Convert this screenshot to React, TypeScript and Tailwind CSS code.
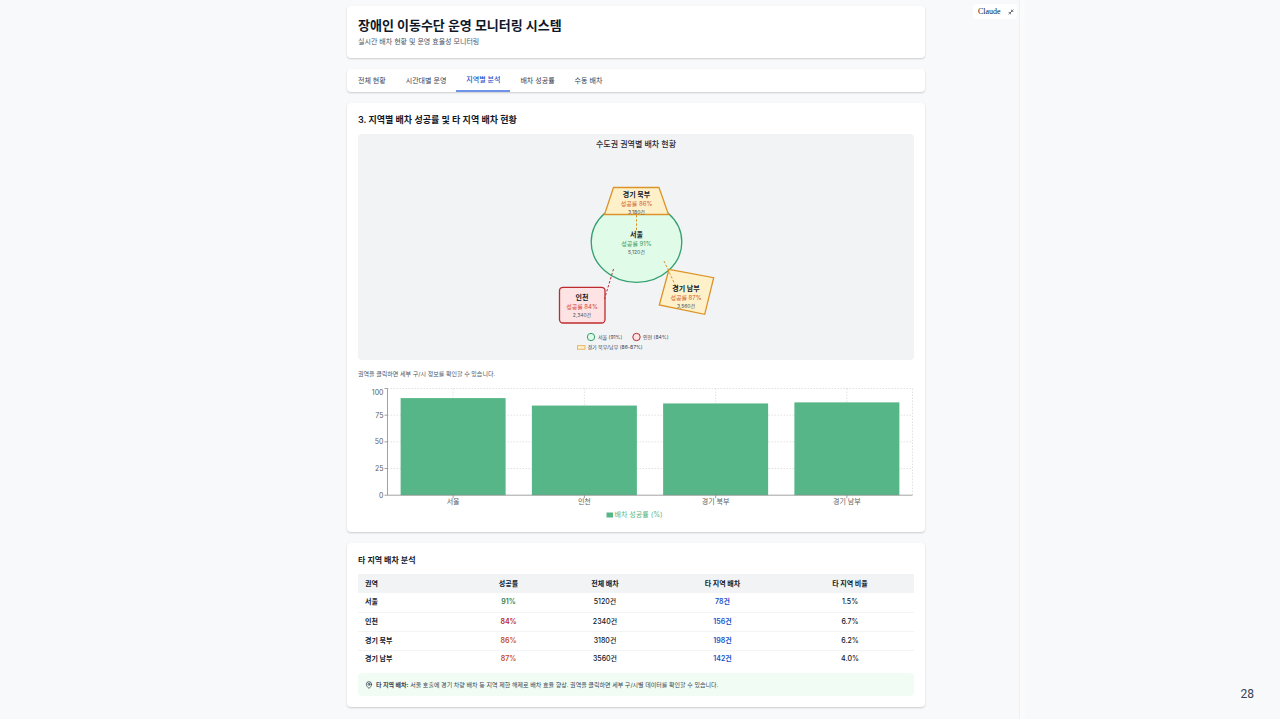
import { MapPin, Minimize2 } from "lucide-react";

type Region = {
  name: string;
  rate: number;
  total: number;
  other: number;
  share: string;
  tone: string;
};

const regions: Region[] = [
  { name: "서울", rate: 91, total: 5120, other: 78, share: "1.5%", tone: "text-[#2f7d43]" },
  { name: "인천", rate: 84, total: 2340, other: 156, share: "6.7%", tone: "text-[#b91c1c]" },
  { name: "경기 북부", rate: 86, total: 3180, other: 198, share: "6.2%", tone: "text-[#c64a14]" },
  { name: "경기 남부", rate: 87, total: 3560, other: 142, share: "4.0%", tone: "text-[#c64a14]" },
];

const tabs = ["전체 현황", "시간대별 운영", "지역별 분석", "배차 성공률", "수동 배차"];
const activeTab = "지역별 분석";

const card = "rounded-[4px] bg-white shadow-[0_1px_2px_rgba(0,0,0,0.18)]";

type LabelProps = { x: number; y: number; name: string; rate: string; count: string; tone: string };

function RegionLabel({ x, y, name, rate, count, tone }: LabelProps) {
  return (
    <g textAnchor="middle">
      <text x={x} y={y} className="fill-gray-900 text-[7px] font-bold">{name}</text>
      <text x={x} y={y + 9} className={`text-[6px] ${tone}`}>{rate}</text>
      <text x={x} y={y + 17} className="fill-gray-600 text-[5px]">{count}</text>
    </g>
  );
}

function RegionMap() {
  return (
    <svg viewBox="0 0 200 202" className="mx-auto block h-[202px] w-[200px]" role="img" aria-label="수도권 권역별 배차 현황">
      <ellipse cx="100.5" cy="90" rx="45.3" ry="40.3" fill="#e1fbe9" stroke="#34a070" strokeWidth="1.3" />
      <polygon points="77.5,35.5 123,35.5 132.5,62.5 68.5,62.5" fill="#fef0c8" stroke="#dc942a" strokeWidth="1.3" />
      <rect x="23.5" y="135.3" width="45.5" height="35.7" rx="3.5" fill="#fde3e3" stroke="#be2b2f" strokeWidth="1.3" />
      <polygon points="133,117.3 177.7,125.7 168.7,162.3 123.3,153" fill="#fef0c8" stroke="#dc942a" strokeWidth="1.3" />
      <g fill="none" strokeWidth="1" strokeDasharray="2.4 1.8">
        <line x1="100.5" y1="63" x2="100.5" y2="80" stroke="#dc942a" />
        <line x1="77.5" y1="117" x2="68.5" y2="147" stroke="#be2b2f" />
        <line x1="128" y1="109" x2="141" y2="137" stroke="#dc942a" />
      </g>
      <RegionLabel x={100.5} y={45} name="경기 북부" rate="성공률 86%" count="3,180건" tone="fill-[#d0602f]" />
      <RegionLabel x={100.5} y={85} name="서울" rate="성공률 91%" count="5,120건" tone="fill-[#3a9a60]" />
      <RegionLabel x={46} y={148} name="인천" rate="성공률 84%" count="2,340건" tone="fill-[#cf4540]" />
      <RegionLabel x={150} y={139} name="경기 남부" rate="성공률 87%" count="3,560건" tone="fill-[#d0602f]" />
      <g className="fill-gray-700 text-[5px]">
        <circle cx="55" cy="185" r="3.7" fill="#e1fbe9" stroke="#34a070" />
        <text x="62" y="187">서울 (91%)</text>
        <circle cx="100.5" cy="185" r="3.7" fill="#fde3e3" stroke="#be2b2f" />
        <text x="107" y="187">인천 (84%)</text>
        <rect x="41.5" y="193.7" width="7.5" height="3.5" fill="#fef0c8" stroke="#e5a94b" strokeWidth="0.8" />
        <text x="51.5" y="197">경기 북부/남부 (86-87%)</text>
      </g>
    </svg>
  );
}

const plot = { left: 29.5, right: 554.5, top: 4.5, bottom: 111.2 };
const yOf = (v: number) => plot.bottom - (v / 100) * (plot.bottom - plot.top);
const step = (plot.right - plot.left) / 4;

function RateChart() {
  return (
    <svg viewBox="0 0 556 137" className="mt-[5px] block w-full" role="img" aria-label="배차 성공률 (%)">
      <g stroke="#d4d4d4" strokeWidth="0.7" strokeDasharray="1.5 1.5">
        {[25, 50, 75, 100].map((v) => (
          <line key={v} x1={plot.left} x2={plot.right} y1={yOf(v)} y2={yOf(v)} />
        ))}
        {regions.map((r, i) => (
          <line key={r.name} x1={plot.left + step * (i + 0.5)} x2={plot.left + step * (i + 0.5)} y1={plot.top} y2={plot.bottom} />
        ))}
        <line x1={plot.right} x2={plot.right} y1={plot.top} y2={plot.bottom} />
      </g>
      {regions.map((r, i) => (
        <rect key={r.name} x={plot.left + step * (i + 0.1)} width={step * 0.8} y={yOf(r.rate)} height={plot.bottom - yOf(r.rate)} fill="#56b687" />
      ))}
      <g stroke="#8a8a8a" strokeWidth="0.8">
        <line x1={plot.left} x2={plot.right} y1={plot.bottom} y2={plot.bottom} />
        <line x1={plot.left} x2={plot.left} y1={plot.top} y2={plot.bottom} />
        {[0, 25, 50, 75, 100].map((v) => (
          <line key={v} x1={plot.left - 3} x2={plot.left} y1={yOf(v)} y2={yOf(v)} />
        ))}
        {regions.map((r, i) => (
          <line key={r.name} x1={plot.left + step * (i + 0.5)} x2={plot.left + step * (i + 0.5)} y1={plot.bottom} y2={plot.bottom + 3} />
        ))}
      </g>
      <g className="fill-[#606060] text-[7px]">
        {[0, 25, 50, 75, 100].map((v) => (
          <text key={v} x="25.5" y={v === 100 ? 10.5 : yOf(v) + 2.5} textAnchor="end">{v}</text>
        ))}
        {regions.map((r, i) => (
          <text key={r.name} x={plot.left + step * (i + 0.5)} y="120" textAnchor="middle">{r.name}</text>
        ))}
      </g>
      <rect x="248.5" y="128.5" width="6.5" height="5" fill="#56b687" />
      <text x="256.5" y="133" className="fill-[#56b687] text-[7px]">배차 성공률 (%)</text>
    </svg>
  );
}

export default function App() {
  return (
    <div
      lang="ko"
      className="grid min-h-screen grid-cols-[1fr_578px_1fr] bg-[#f8f9fb] pr-2 font-[family-name:Inter,'Noto_Sans_CJK_KR',sans-serif] text-gray-900"
    >
      <div />

      <main className="flex flex-col gap-[11px] pt-[6px] pb-[11px]">
        <header className={`${card} p-[11px]`}>
          <h1 className="text-[13px] leading-[16px] font-bold">장애인 이동수단 운영 모니터링 시스템</h1>
          <p className="mt-[3px] text-[7px] leading-[11px] text-gray-600">실시간 배차 현황 및 운영 효율성 모니터링</p>
        </header>

        <nav className={`${card} flex h-[23px] pl-px`}>
          {tabs.map((t) => (
            <button
              key={t}
              type="button"
              aria-current={t === activeTab ? "page" : undefined}
              className={
                t === activeTab
                  ? "border-b-2 border-[#6f93e8] px-[10px] text-[7px] leading-[12px] font-medium text-[#2150c8]"
                  : "px-[10px] text-[7px] leading-[12px] text-gray-700"
              }
            >
              {t}
            </button>
          ))}
        </nav>

        <section className={`${card} p-[11px]`}>
          <h2 className="text-[9px] leading-[12px] font-semibold">3. 지역별 배차 성공률 및 타 지역 배차 현황</h2>
          <div className="mt-2 rounded-[4px] bg-[#f2f3f5] pt-1 pb-[6px]">
            <h3 className="text-center text-[8px] leading-[12px] font-medium text-gray-800">수도권 권역별 배차 현황</h3>
            <div className="mt-[2px]">
              <RegionMap />
            </div>
          </div>
          <p className="mt-[9px] text-[6px] leading-[10px] text-gray-600">권역을 클릭하면 세부 구/시 정보를 확인할 수 있습니다.</p>
          <RateChart />
        </section>

        <section className={`${card} p-[11px]`}>
          <h2 className="text-[8px] leading-[12px] font-semibold">타 지역 배차 분석</h2>
          <table className="mt-2 w-full table-fixed border-collapse text-center text-[7px] leading-[12px]">
            <colgroup>
              <col className="w-[108px]" />
              <col className="w-[85px]" />
              <col className="w-[108px]" />
              <col className="w-[127px]" />
              <col className="w-[128px]" />
            </colgroup>
            <thead>
              <tr className="h-[19px] bg-[#f2f3f5]">
                <th scope="col" className="px-[7px] text-left font-bold">권역</th>
                <th scope="col" className="font-bold">성공률</th>
                <th scope="col" className="font-bold">전체 배차</th>
                <th scope="col" className="font-bold">타 지역 배차</th>
                <th scope="col" className="font-bold">타 지역 비율</th>
              </tr>
            </thead>
            <tbody>
              {regions.map((r) => (
                <tr key={r.name} className="h-[19px] border-b border-gray-100 last:h-[18px] last:border-b-0">
                  <th scope="row" className="px-[7px] text-left font-bold">{r.name}</th>
                  <td className={`font-semibold ${r.tone}`}>{r.rate}%</td>
                  <td className="font-medium">{r.total}건</td>
                  <td className="font-semibold text-[#2150c8]">{r.other}건</td>
                  <td className="font-medium">{r.share}</td>
                </tr>
              ))}
            </tbody>
          </table>
          <p className="mt-[5px] flex h-[23px] items-center gap-[3px] rounded-[4px] bg-[#f1fdf4] px-[7px] text-[6px] leading-[10px] text-gray-700">
            <MapPin className="size-[8px]" strokeWidth={2.4} aria-hidden="true" />
            <span>
              <strong className="font-bold">타 지역 배차:</strong> 서울 호출에 경기 차량 배차 등 지역 제한 해제로 배차 효율 향상. 권역을 클릭하면 세부 구/시별 데이터를 확인할 수 있습니다.
            </span>
          </p>
        </section>
      </main>

      <aside className="flex pl-12">
        <button
          type="button"
          className="mt-1 mr-[2px] flex h-[15px] w-[44px] shrink-0 items-center justify-between rounded-[4px] bg-white pr-[3px] pl-[5px] font-[family-name:'Liberation_Serif',serif] text-[8px] leading-[12px]"
        >
          <span>Claude</span>
          <Minimize2 className="size-[6px]" strokeWidth={2} aria-hidden="true" />
        </button>
        <div className="w-[6px] shrink-0 border-l border-[#eff0f3] bg-[#fbfbfc]" />
        <p className="mt-auto ml-auto pr-[18px] pb-[17px] font-[family-name:Roboto,sans-serif] text-[12px] leading-[16px] text-gray-700">28</p>
      </aside>
    </div>
  );
}
